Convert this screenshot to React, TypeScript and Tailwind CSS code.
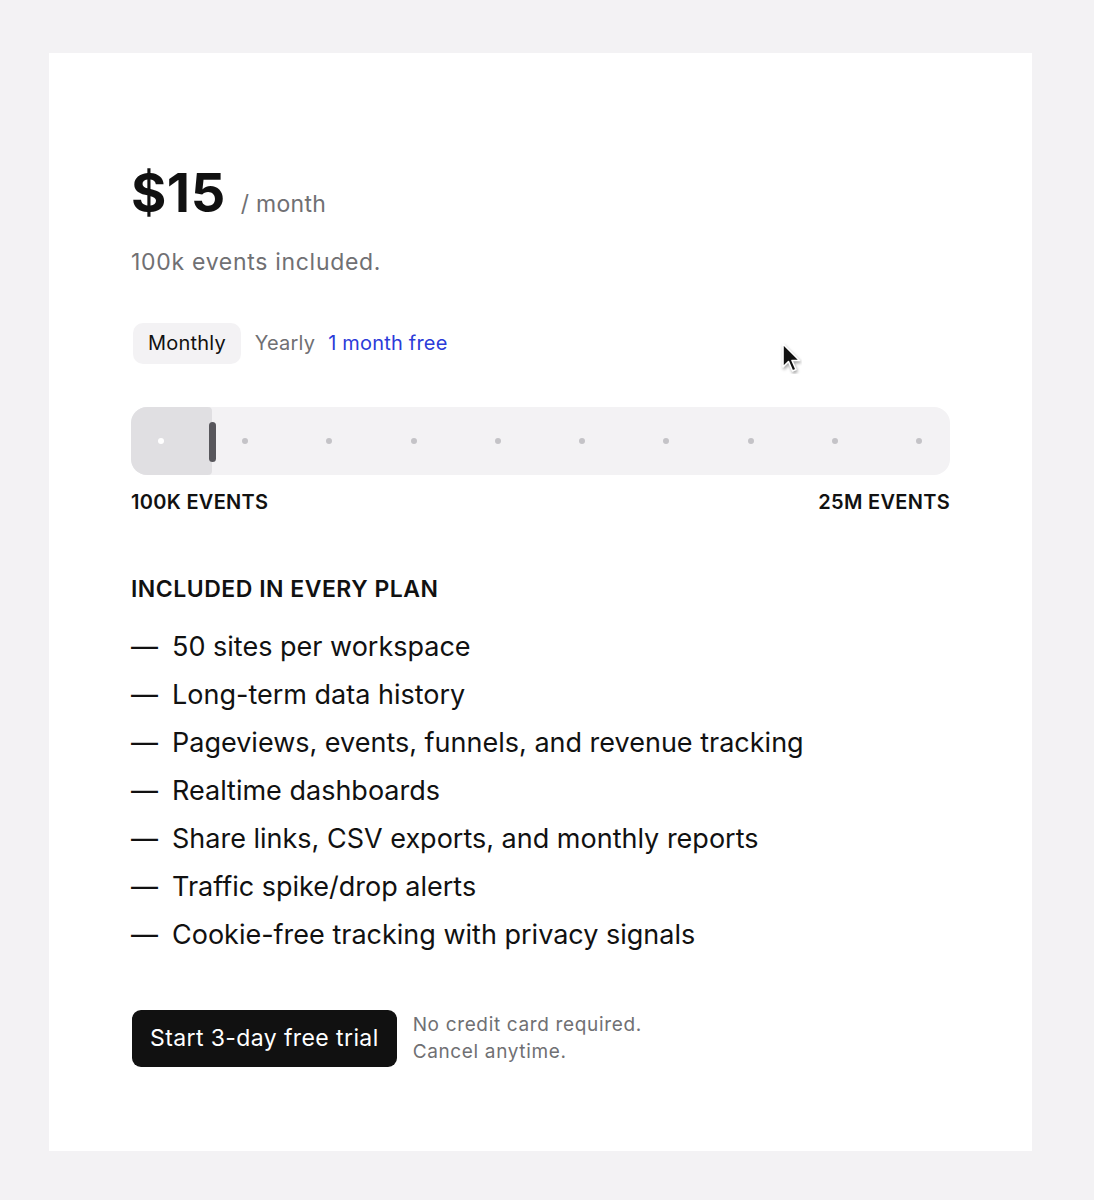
import { useState } from "react";

const features = [
  "50 sites per workspace",
  "Long-term data history",
  "Pageviews, events, funnels, and revenue tracking",
  "Realtime dashboards",
  "Share links, CSV exports, and monthly reports",
  "Traffic spike/drop alerts",
  "Cookie-free tracking with privacy signals",
];

const steps = Array.from({ length: 10 }, (_, i) => i);

export default function App() {
  const [billing, setBilling] = useState<"monthly" | "yearly">("monthly");
  const [step] = useState(0);

  return (
    <div
      className="relative min-h-[1200px] w-[1094px] bg-[#f3f2f4] pl-[49px] pt-[53px] text-[#111111]"
      style={{ fontFamily: "Inter, 'Noto Sans', sans-serif" }}
    >
      <div className="h-[1098px] w-[983px] bg-white px-[82px] pt-[113px]">
        {/* Price */}
        <div className="flex items-baseline gap-[15px]">
          <span className="text-[54px] font-bold leading-none tracking-[0.5px]">$15</span>
          <span className="text-[23px] tracking-[0.3px] text-[#707073]">/ month</span>
        </div>
        <p className="mt-[24px] text-[23px] leading-[33px] tracking-[0.7px] text-[#707073]">
          100k events included.
        </p>

        {/* Billing toggle */}
        <div className="mt-[44px] flex items-center text-[20px] tracking-[0.2px]">
          <button
            onClick={() => setBilling("monthly")}
            className={`ml-[2px] h-[41px] rounded-[10px] px-[15px] ${
              billing === "monthly" ? "bg-[#f3f2f4] text-[#111]" : "text-[#707073]"
            }`}
          >
            Monthly
          </button>
          <button
            onClick={() => setBilling("yearly")}
            className={`ml-[14px] ${billing === "yearly" ? "text-[#111]" : "text-[#707073]"}`}
          >
            Yearly
          </button>
          <span className="ml-[13px] text-[#2b3bd9]">1 month free</span>
        </div>

        {/* Slider */}
        <div className="relative mt-[43px] flex h-[68px] items-center rounded-[16px] bg-[#f3f2f4]">
          <div
            className="absolute left-0 top-0 h-full rounded-l-[16px] rounded-r-[4px] bg-[#e0dfe2]"
            style={{ width: 81 + step * 84 }}
          />
          <div
            className="absolute top-[15px] h-[40px] w-[7px] rounded-full bg-[#58575c]"
            style={{ left: 78 + step * 84 }}
          />
          <div className="relative flex w-full justify-between pl-[27px] pr-[28px]">
            {steps.map((i) => (
              <span
                key={i}
                className={`h-[6px] w-[6px] rounded-full ${
                  i <= step ? "bg-white" : "bg-[#c4c3c7]"
                }`}
              />
            ))}
          </div>
        </div>
        <div className="mt-[15px] flex justify-between text-[20px] font-semibold leading-[24px] tracking-[0.3px]">
          <span>100K EVENTS</span>
          <span>25M EVENTS</span>
        </div>

        {/* Features */}
        <h3 className="mt-[61px] text-[23px] font-semibold leading-[28px] tracking-[0.5px]">
          INCLUDED IN EVERY PLAN
        </h3>
        <ul className="mt-[20px] flex flex-col text-[27px] leading-[48px]">
          {features.map((f) => (
            <li key={f} className="flex">
              <span className="w-[41px]">—</span>
              <span>{f}</span>
            </li>
          ))}
        </ul>

        {/* CTA */}
        <div className="mt-[51px] flex items-center gap-[16px]">
          <button className="ml-[1px] h-[57px] rounded-[9px] bg-[#111111] px-[18px] text-[23px] tracking-[0.4px] text-white">
            Start 3-day free trial
          </button>
          <p className="text-[19px] leading-[27px] tracking-[0.65px] text-[#707073]">
            No credit card required.
            <br />
            Cancel anytime.
          </p>
        </div>
      </div>

      {/* Mouse cursor */}
      <svg
        className="absolute left-[780px] top-[342px]"
        width="22"
        height="32"
        viewBox="0 0 22 32"
      >
        <path
          d="M3 2 L3 25 L8.5 19.5 L12.5 29 L16 27.5 L12 18.5 L19.5 18.5 Z"
          fill="#111"
          stroke="white"
          strokeWidth="1.6"
          strokeLinejoin="round"
          style={{ filter: "drop-shadow(1px 2px 1.5px rgba(0,0,0,0.35))" }}
        />
      </svg>
    </div>
  );
}
